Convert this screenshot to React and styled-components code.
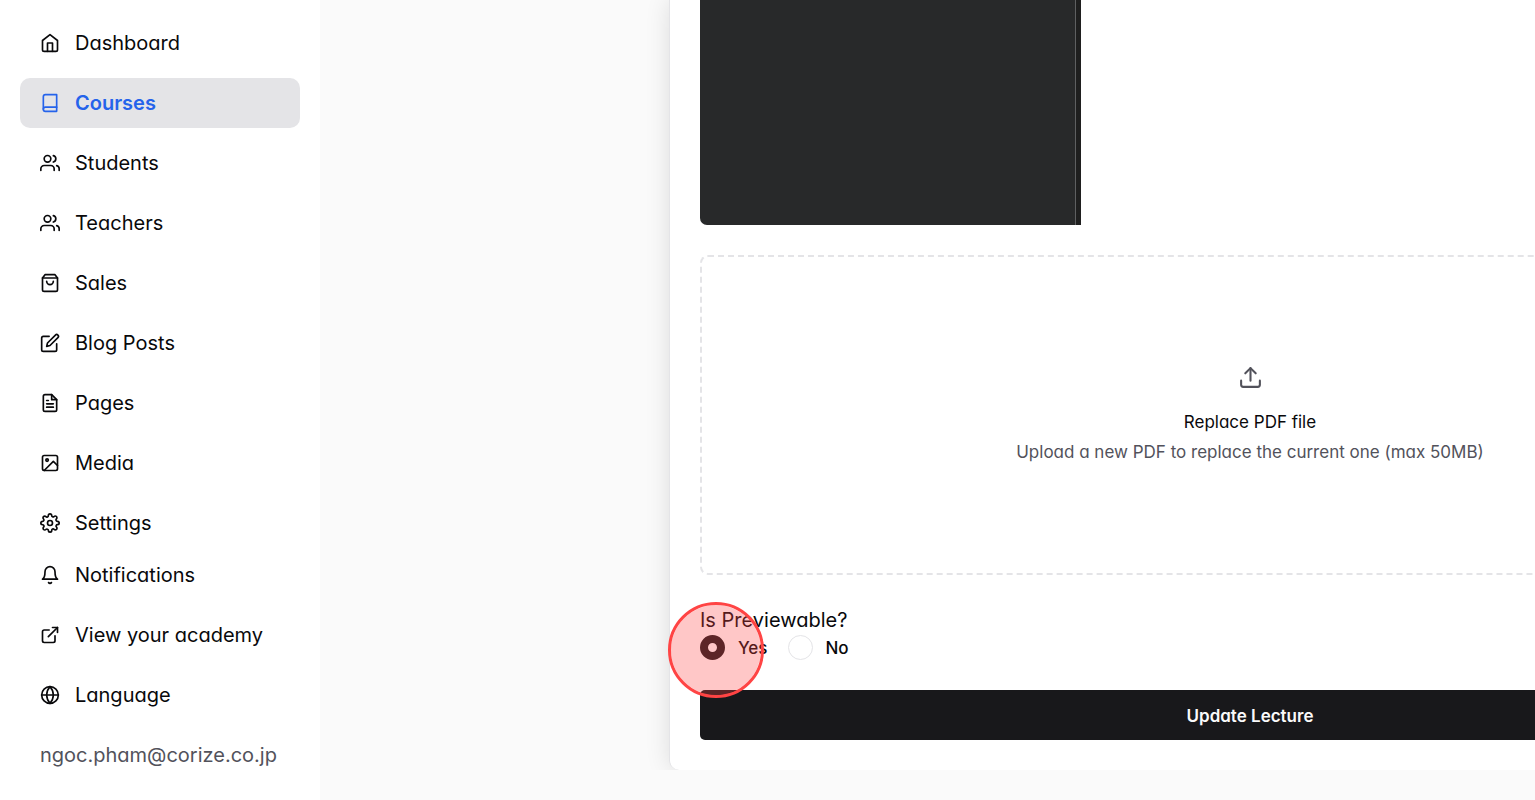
import React from "react";
import styled, { createGlobalStyle } from "styled-components";
import {
  FiHome, FiBook, FiUsers, FiShoppingBag, FiEdit, FiFileText, FiImage, FiSettings,
  FiBell, FiExternalLink, FiGlobe, FiUpload,
} from "react-icons/fi";

const GlobalStyle = createGlobalStyle`
  *, *::before, *::after { box-sizing: border-box; }
  body {
    margin: 0;
    background: #fafafa;
    color: #09090b;
    font-family: Inter, "Liberation Sans", sans-serif;
    font-feature-settings: "cv11";
    font-size: 20px;
    line-height: 30px;
  }
`;

const Page = styled.div`
  display: flex;
  min-height: 100vh;
`;

const Sidebar = styled.aside`
  display: flex;
  flex-direction: column;
  justify-content: space-between;
  flex: 0 0 320px;
  padding: 18px 20px 20px;
  background: #ffffff;
`;

const NavList = styled.nav`
  display: flex;
  flex-direction: column;
  gap: 10px;
`;

const NavLink = styled.a`
  display: flex;
  align-items: center;
  gap: 15px;
  height: 50px;
  padding: 0 20px;
  border-radius: 10px;
  color: ${({ $active }) => ($active ? "#2563eb" : "#09090b")};
  background: ${({ $active }) => ($active ? "#e4e4e7" : "transparent")};
  font-weight: ${({ $active }) => ($active ? 600 : 400)};
  text-decoration: none;
`;

const Account = styled.div`
  height: 50px;
  padding: 10px 20px;
  color: #52525b;
`;

const Main = styled.main`
  display: flex;
  flex: 1;
  flex-direction: column;
  min-width: 0;
  padding-bottom: 30px;
`;

const Viewport = styled.div`
  flex: 1;
  overflow: hidden;
`;

const Card = styled.form`
  display: flex;
  flex-direction: column;
  min-height: 100%;
  width: calc(100vw - 373px);
  margin-left: 349px;
  padding: 0 30px 30px;
  border: 1px solid #e4e4e7;
  border-top: 0;
  border-bottom: 0;
  border-radius: 0 0 10px 10px;
  background: #ffffff;
  box-shadow: 0 0 25px rgba(0, 0, 0, 0.12);
`;

const PdfPreview = styled.div`
  display: flex;
  justify-content: flex-end;
  width: 381px;
  height: 225px;
  border-radius: 0 0 0 7px;
  background: #28292a;
`;

const PdfScrollbar = styled.div`
  width: 6px;
  border-left: 1px solid #5f6061;
  background: #1f1f1f;
`;

const DropZone = styled.button`
  display: flex;
  flex-direction: column;
  align-items: center;
  justify-content: center;
  gap: 20px;
  height: 320px;
  margin-top: 30px;
  padding: 0;
  border: 2px dashed #e4e4e7;
  border-radius: 8px;
  background: transparent;
  color: #52525b;
  font: inherit;
  font-size: 17px;
  line-height: 25px;
  font-feature-settings: inherit;
`;

const DropText = styled.span`
  display: flex;
  flex-direction: column;
  gap: 5px;
`;

const DropTitle = styled.span`
  color: #09090b;
`;

const Previewable = styled.fieldset`
  display: flex;
  gap: 20px;
  margin: 30px 0 0;
  padding: 0;
  border: 0;
`;

const Legend = styled.legend`
  padding: 0;
`;

const Choice = styled.label`
  display: flex;
  align-items: center;
  gap: 13px;
  height: 25px;
  font-size: 17px;
  font-weight: 500;
`;

const Radio = styled.input`
  appearance: none;
  width: 25px;
  height: 25px;
  margin: 0;
  border: 1px solid #e4e4e7;
  border-radius: 50%;
  background: #ffffff;

  &:checked {
    border: 8px solid #18181b;
  }
`;

const Submit = styled.button`
  height: 50px;
  margin-top: 30px;
  padding: 2px 0 0;
  border: 0;
  border-radius: 5px;
  background: #18181b;
  color: #fafafa;
  font: inherit;
  font-size: 17px;
  font-weight: 600;
  font-feature-settings: inherit;
`;

const ClickMarker = styled.span`
  position: absolute;
  top: 602px;
  left: 668px;
  width: 96px;
  height: 96px;
  border: 3px solid #ff4444;
  border-radius: 50%;
  background: rgba(255, 68, 68, 0.3);
  background-clip: padding-box;
  pointer-events: none;
`;

const primary = [
  ["Dashboard", FiHome], ["Courses", FiBook], ["Students", FiUsers],
  ["Teachers", FiUsers], ["Sales", FiShoppingBag], ["Blog Posts", FiEdit],
  ["Pages", FiFileText], ["Media", FiImage], ["Settings", FiSettings],
];

const secondary = [
  ["Notifications", FiBell], ["View your academy", FiExternalLink], ["Language", FiGlobe],
];

function Links({ items }) {
  return items.map(([label, Icon]) => (
    <NavLink key={label} href="#" $active={label === "Courses"}>
      <Icon size={20} />
      {label}
    </NavLink>
  ));
}

export default function App() {
  return (
    <Page>
      <GlobalStyle />
      <Sidebar>
        <NavList aria-label="Main"><Links items={primary} /></NavList>
        <NavList aria-label="Account">
          <Links items={secondary} />
          <Account>ngoc.pham@corize.co.jp</Account>
        </NavList>
      </Sidebar>
      <Main>
        <Viewport>
          <Card>
            <PdfPreview><PdfScrollbar /></PdfPreview>
            <DropZone type="button">
              <FiUpload size={25} />
              <DropText>
                <DropTitle>Replace PDF file</DropTitle>
                <span>Upload a new PDF to replace the current one (max 50MB)</span>
              </DropText>
            </DropZone>
            <Previewable>
              <Legend>Is Previewable?</Legend>
              <Choice><Radio type="radio" name="previewable" defaultChecked />Yes</Choice>
              <Choice><Radio type="radio" name="previewable" />No</Choice>
            </Previewable>
            <Submit type="button">Update Lecture</Submit>
          </Card>
        </Viewport>
      </Main>
      <ClickMarker />
    </Page>
  );
}
